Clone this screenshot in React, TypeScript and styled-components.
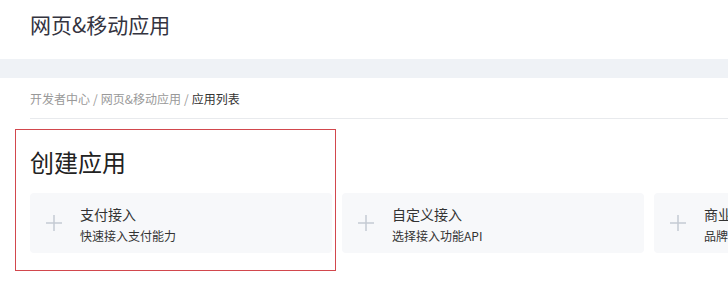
import React from 'react';
import styled, { createGlobalStyle } from 'styled-components';

const GlobalStyle = createGlobalStyle`
  html {
    overflow: hidden;
  }
  body {
    margin: 0;
    padding: 0;
    background: #ffffff;
    font-family: "Noto Sans CJK SC", "Noto Sans", "Liberation Sans", sans-serif;
    color: #333333;
  }
`;

const Header = styled.header`
  height: 59px;
  padding: 10px 0 0 30px;
  box-sizing: border-box;
`;

const PageTitle = styled.h1`
  margin: 0;
  font-size: 21px;
  line-height: 28px;
  font-weight: 400;
  color: #34343f;
`;

const Band = styled.div`
  height: 19px;
  background: #eff2f6;
`;

const Main = styled.main`
  padding-left: 30px;
`;

const Breadcrumb = styled.nav`
  padding: 11px 0 9px;
  border-bottom: 1px solid #e8eaed;
  font-size: 12px;
  line-height: 20px;
  color: #999999;
`;

const Crumb = styled.span<{ $current?: boolean }>`
  color: ${p => (p.$current ? '#333333' : '#999999')};
`;

const Sep = styled.span`
  margin: 0 3px;
  color: #999999;
`;

const Section = styled.section`
  position: relative;
  margin-top: 10px;
  padding: 18px 0 18px;
`;

const Highlight = styled.div`
  position: absolute;
  left: -15px;
  top: 0;
  width: 321px;
  height: 142px;
  box-sizing: border-box;
  border: 1px solid #d2474d;
  pointer-events: none;
`;

const SectionTitle = styled.h2`
  margin: 0 0 16px;
  font-size: 24px;
  line-height: 30px;
  font-weight: 400;
  color: #222222;
`;

const CardRow = styled.div`
  display: flex;
  flex-wrap: nowrap;
  gap: 10px;
`;

const Card = styled.div`
  flex: 0 0 302px;
  height: 60px;
  box-sizing: border-box;
  padding-left: 16px;
  display: flex;
  align-items: center;
  gap: 18px;
  background: #f7f8fa;
  border-radius: 4px;
`;

const CardText = styled.div`
  display: flex;
  flex-direction: column;
  gap: 3px;
  margin-top: 3px;
  white-space: nowrap;
`;

const CardTitle = styled.div`
  font-size: 14px;
  line-height: 20px;
  color: #333333;
`;

const CardDesc = styled.div`
  font-size: 12px;
  line-height: 18px;
  color: #333333;
`;

const PlusIcon = () => (
  <svg width="16" height="16" viewBox="0 0 16 16" style={{ flex: '0 0 16px' }}>
    <path d="M8 0v16M0 8h16" stroke="#c5cad3" strokeWidth="1.5" fill="none" />
  </svg>
);

const cards = [
  { title: '支付接入', desc: '快速接入支付能力' },
  { title: '自定义接入', desc: '选择接入功能API' },
  { title: '商业合作接入', desc: '品牌推广合作能力' },
];

function App() {
  return (
    <>
      <GlobalStyle />
      <Header>
        <PageTitle>网页&amp;移动应用</PageTitle>
      </Header>
      <Band />
      <Main>
        <Breadcrumb>
          <Crumb>开发者中心</Crumb>
          <Sep>/</Sep>
          <Crumb>网页&amp;移动应用</Crumb>
          <Sep>/</Sep>
          <Crumb $current>应用列表</Crumb>
        </Breadcrumb>
        <Section>
          <Highlight />
          <SectionTitle>创建应用</SectionTitle>
          <CardRow>
            {cards.map(c => (
              <Card key={c.title}>
                <PlusIcon />
                <CardText>
                  <CardTitle>{c.title}</CardTitle>
                  <CardDesc>{c.desc}</CardDesc>
                </CardText>
              </Card>
            ))}
          </CardRow>
        </Section>
      </Main>
    </>
  );
}

export default App;
